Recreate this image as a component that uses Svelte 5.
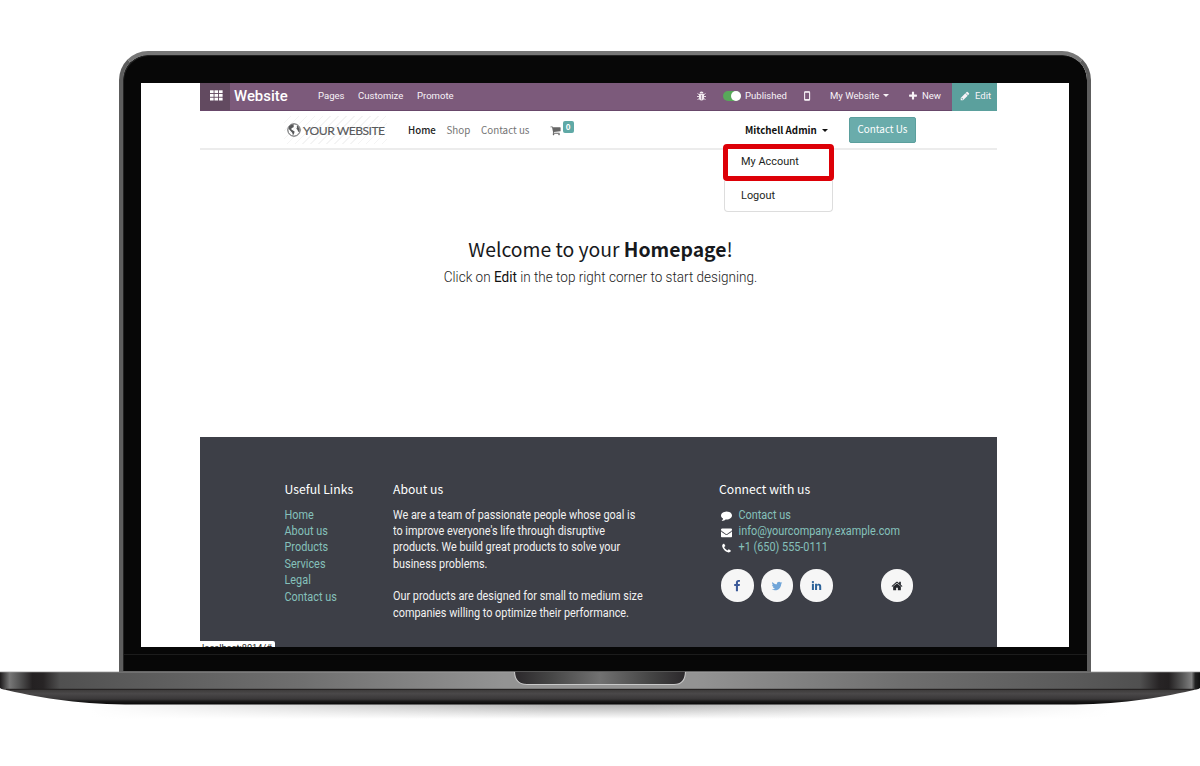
<script>
  const links = ['Home', 'About us', 'Products', 'Services', 'Legal', 'Contact us'];
  const icons = {
    cart: 'M704 1536q0 52-38 90t-90 38-90-38-38-90 38-90 90-38 90 38 38 90zm896 0q0 52-38 90t-90 38-90-38-38-90 38-90 90-38 90 38 38 90zm128-1088v512q0 24-16.5 42.5t-40.5 21.5l-1044 122q13 60 13 70 0 16-24 64h920q26 0 45 19t19 45-19 45-45 19h-1024q-26 0-45-19t-19-45q0-11 8-31.5t16-36 21.5-40 15.5-29.5l-177-823h-204q-26 0-45-19t-19-45 19-45 45-19h256q16 0 28.5 6.5t19.5 15.5 13 24.5 8 26 5.5 29.5 4.5 26h1201q26 0 45 19t19 45z',
    pencil: 'M491 1536l91-91-235-235-91 91v107h128v128h107zM960 416l416 416-832 832h-416v-416zm683 96q0 53-37 90l-166 166-416-416 166-165q36-38 90-38 53 0 91 38l235 234q37 39 37 91z',
    plus: 'M1600 736v192q0 40-28 68t-68 28h-416v416q0 40-28 68t-68 28h-192q-40 0-68-28t-28-68v-416h-416q-40 0-68-28t-28-68v-192q0-40 28-68t68-28h416v-416q0-40 28-68t68-28h192q40 0 68 28t28 68v416h416q40 0 68 28t28 68z',
    facebook: 'M1343 12v264h-157q-86 0-116 36t-30 108v189h293l-39 296h-254v759h-306v-759h-255v-296h255v-218q0-186 104-288.5t277-102.5q147 0 228 12z',
    twitter: 'M1684 408q-67 98-162 167 1 14 1 42 0 130-38 259.5t-115.5 248.5-184.5 210.5-258 146-323 54.5q-271 0-496-145 35 4 78 4 225 0 401-138-105-2-188-64.5t-114-159.5q33 5 61 5 43 0 85-11-112-23-185.5-111.5t-73.5-205.5v-4q68 38 146 41-66-44-105-115t-39-154q0-88 44-163 121 149 294.5 238.5t371.5 99.5q-8-38-8-74 0-134 94.5-228.5t228.5-94.5q140 0 236 102 109-21 205-78-37 115-142 178 93-10 186-50z',
    linkedin: 'M477 625v991h-330v-991h330zm21-306q1 73-50.5 122t-135.5 49h-2q-82 0-132-49t-50-122q0-74 51.5-122.5t134.5-48.5 133 48.5 51 122.5zm1166 729v568h-329v-530q0-105-40.5-164.5t-126.5-59.5q-63 0-105.5 34.5t-63.5 85.5q-11 30-11 81v553h-329q2-399 2-647t-1-296l-1-48h329v144h-2q20-32 41-56t56.5-52 87-43.5 114.5-15.5q171 0 275 113.5t104 332.5z',
    home: 'M1472 992v480q0 26-19 45t-45 19h-384v-384h-256v384h-384q-26 0-45-19t-19-45v-480q0-1 .5-3t.5-3l575-474 575 474q1 2 1 6zm223-69l-62 74q-8 9-21 11h-3q-13 0-21-7l-692-577-692 577q-12 8-24 7-13-2-21-11l-62-74q-8-10-7-23.5t11-21.5l719-599q32-26 76-26t76 26l244 204v-195q0-14 9-23t23-9h192q14 0 23 9t9 23v408l219 182q10 8 11 21.5t-7 23.5z',
    comment: 'M1792 896q0 174-120 321.5t-326 233-450 85.5q-70 0-145-8-198 175-460 242-49 14-114 22-17 2-30.5-9t-17.5-29v-1q-3-4-.5-12t2-10 4.5-9.5l6-9 7-8.5 8-9q7-8 31-34.5t34.5-38 31-39.5 32.5-51 27-59 26-76q-157-89-247.5-220t-90.5-281q0-130 71-248.5t191-204.5 286-136.5 348-50.5q244 0 450 85.5t326 233 120 321.5z',
    envelope: 'M1792 710v794q0 66-47 113t-113 47h-1472q-66 0-113-47t-47-113v-794q44 49 101 87 362 246 497 345 57 42 92.5 65.5t94.5 48 110 24.5h2q51 0 110-24.5t94.5-48 92.5-65.5q170-123 498-345 57-39 100-87zm0-294q0 79-49 151t-122 123q-376 261-468 325-10 7-42.5 31t-54 38.5-52 32.5-57.5 27-50 9h-2q-23 0-50-9t-57.5-27-52-32.5-54-38.5-42.5-31q-91-64-262-182.5t-205-142.5q-62-42-117-115.5t-55-136.5q0-78 41.5-130t118.5-52h1472q65 0 112.5 47t47.5 113z',
    phone: 'M1600 1240q0 27-10 70.5t-21 68.5q-21 50-122 106-94 51-186 51-27 0-53-3.5t-57.5-12.5-47-14.5-55.5-20.5-49-18q-98-35-175-83-127-79-264-216t-216-264q-48-77-83-175-3-9-18-49t-20.5-55.5-14.5-47-12.5-57.5-3.5-53q0-92 51-186 56-101 106-122 25-11 68.5-21t70.5-10q14 0 21 3 18 6 53 76 11 19 30 54t35 63.5 31 53.5q3 4 17.5 25t21.5 35.5 7 28.5q0 20-28.5 50t-62 55-62 53-28.5 46q0 9 5 22.5t8.5 20.5 14 24 11.5 19q76 137 174 235t235 174q2 1 19 11.5t24 14 20.5 8.5 22.5 5q18 0 46-28.5t53-62 55-62 50-28.5q14 0 28.5 7t35.5 21.5 25 17.5q25 15 53.5 31t63.5 35 54 30q70 35 76 53 3 7 3 21z',
  };
  const contacts = [
    ['comment', 'Contact us'],
    ['envelope', 'info@yourcompany.example.com'],
    ['phone', '+1 (650) 555-0111'],
  ];
</script>

{#snippet icon(name, size)}
  <svg width={size} height={size} viewBox="0 0 1792 1792" fill="currentColor"><path d={icons[name]} /></svg>
{/snippet}

<div class="stage">
  <div class="lid">
    <div class="display">
      <div class="page">
        <nav class="topbar">
          <span class="apps">
            <svg width="13" height="11" viewBox="0 0 13 11" fill="#fff">
              {#each [0.3, 4, 7.7] as y}
                {#each [0, 4.5, 9] as x}
                  <rect {x} {y} width="3.6" height="2.8" />
                {/each}
              {/each}
            </svg>
          </span>
          <span class="brand">Website</span>
          <span>Pages</span>
          <span>Customize</span>
          <span>Promote</span>
          <span>
            <svg width="9" height="10" viewBox="0 0 18 20">
              <path d="M5 5a4 4 0 0 1 8 0zM4 6h10v8a5 5 0 0 1-10 0z" fill="#f1e9ef" />
              <path d="M1 5l4 3M17 5l-4 3M0 11h5M18 11h-5M1 18l4-4M17 18l-4-4" stroke="#f1e9ef" stroke-width="1.8" fill="none" />
              <path d="M9 8v9" stroke="#7c5a7b" stroke-width="1.2" />
            </svg>
          </span>
          <span class="toggle"><i></i></span>
          <span class="published">Published</span>
          <span>
            <svg width="8" height="10" viewBox="0 0 8 10"><rect x="1.6" y=".7" width="5" height="8.6" rx=".8" fill="none" stroke="#f4eef4" stroke-width="1.1" /><path d="M1.6 1.2h5M1.6 8.6h5" stroke="#f4eef4" stroke-width="1.2" /></svg>
          </span>
          <span>My Website<b class="caret"></b></span>
          <span class="new">{@render icon('plus', 10)}New</span>
          <span class="edit">{@render icon('pencil', 10)}Edit</span>
        </nav>

        <header class="sitebar">
          <div class="logo">
            <svg width="14" height="14" viewBox="0 0 14 14">
              <circle cx="7" cy="7" r="6.2" fill="none" stroke="#58595b" stroke-width="1" />
              <path d="M2 3.3L4.6 1.4 7.2 1.6 6.4 2.9 7 4 5.4 4.8 4 6 5.2 7 7.6 8.4 7.2 10.2 6 12.4 5.2 9.8 3.8 8.2 1.8 6zM9.8 2.4l1.6 1.2 1.2 2.8-.4 2.6-1.2-.4-.4-1.6-1.2-1.2.6-1.6z" fill="#58595b" />
            </svg>
            <span>YOUR WEBSITE</span>
          </div>
          <span class="current">Home</span>
          <span>Shop</span>
          <span>Contact us</span>
          <span class="cart">{@render icon('cart', 11)}<b>0</b></span>
          <div class="user">
            Mitchell Admin<b class="caret"></b>
            <div class="menu">
              <div class="account">My Account</div>
              <div class="logout">Logout</div>
            </div>
          </div>
          <button>Contact Us</button>
        </header>

        <main>
          <h1>Welcome to your <b>Homepage</b>!</h1>
          <p>Click on <b>Edit</b> in the top right corner to start designing.</p>
        </main>

        <footer>
          <section>
            <h2>Useful Links</h2>
            {#each links as l}<div class="row link tall">{l}</div>{/each}
          </section>
          <section class="about">
            <h2>About us</h2>
            <div class="row tall">We are a team of passionate people whose goal is</div>
            <div class="row tall">to improve everyone's life through disruptive</div>
            <div class="row tall">products. We build great products to solve your</div>
            <div class="row tall">business problems.</div>
            <div class="row tall second">Our products are designed for small to medium size</div>
            <div class="row tall">companies willing to optimize their performance.</div>
          </section>
          <section>
            <h2>Connect with us</h2>
            {#each contacts as [name, text]}
              <div class="row contact">{@render icon(name, 11)}<span class="link tall">{text}</span></div>
            {/each}
            <div class="social">
              <span class="fb">{@render icon('facebook', 12)}</span>
              <span class="tw">{@render icon('twitter', 12)}</span>
              <span class="li">{@render icon('linkedin', 11)}</span>
              <span class="hm">{@render icon('home', 12)}</span>
            </div>
          </section>
        </footer>
        <div class="status">localhost:8014/#</div>
      </div>
    </div>
  </div>

  <svg class="base" width="1200" height="60" viewBox="0 0 1200 60">
    <defs>
      <linearGradient id="deck">
        <stop offset="0" stop-color="#1c1a1b" /><stop offset=".008" stop-color="#777" />
        <stop offset=".016" stop-color="#555" /><stop offset=".027" stop-color="#242122" />
        <stop offset=".036" stop-color="#272425" /><stop offset=".05" stop-color="#505050" />
        <stop offset=".1" stop-color="#595959" /><stop offset=".25" stop-color="#6f6f6f" />
        <stop offset=".42" stop-color="#939393" /><stop offset=".58" stop-color="#939393" />
        <stop offset=".75" stop-color="#6f6f6f" /><stop offset=".9" stop-color="#595959" />
        <stop offset=".95" stop-color="#505050" /><stop offset=".966" stop-color="#272425" />
        <stop offset=".974" stop-color="#242122" /><stop offset=".985" stop-color="#555" />
        <stop offset=".993" stop-color="#808080" /><stop offset=".996" stop-color="#222" /><stop offset="1" stop-color="#111" />
      </linearGradient>
      <linearGradient id="belly" x2="0" y2="1">
        <stop offset="0" stop-color="#3a3838" /><stop offset=".3" stop-color="#4a4849" />
        <stop offset=".65" stop-color="#393738" /><stop offset=".8" stop-color="#1b1a1a" /><stop offset="1" stop-color="#080808" />
      </linearGradient>
      <linearGradient id="notch">
        <stop offset="0" stop-color="#2b282b" /><stop offset=".2" stop-color="#444" /><stop offset=".5" stop-color="#717171" />
        <stop offset=".8" stop-color="#444" /><stop offset="1" stop-color="#2b282b" />
      </linearGradient>
      <linearGradient id="shade" x2="0" y2="1">
        <stop offset="0" stop-color="#aaa" /><stop offset="1" stop-color="#fff" />
      </linearGradient>
      <linearGradient id="fade"><stop offset="0" stop-color="#fff" /><stop offset=".45" stop-color="#fff" stop-opacity="0" /><stop offset=".55" stop-color="#fff" stop-opacity="0" /><stop offset="1" stop-color="#fff" /></linearGradient>
    </defs>
    <rect x="90" y="32" width="1020" height="16" fill="url(#shade)" />
    <rect x="90" y="32" width="1020" height="17" fill="url(#fade)" />
    <path d="M2 18C35 26 75 33 125 33.4H1075C1125 33 1165 26 1198 18z" fill="url(#belly)" />
    <path d="M0 1H1200V17Q1198 19 1194 18H6Q2 19 0 17z" fill="url(#deck)" />
    <path d="M0 .9H1200" stroke="#aaa" stroke-opacity=".75" />
    <path d="M6 18.3H1194" stroke="#211e1e" />
    <path d="M514.5 0C514.5 8 518 13.5 527 13.5H674C682 13.5 685.500 8 685.500 0z" fill="url(#notch)" stroke="#c8c8c8" stroke-width="1.1" />
    <path d="M119 .3H1091" stroke="#4b4b4b" />
  </svg>
</div>

<style>
  :global(body) { margin: 0; background: #fff; }
  .stage { width: 1200px; height: 766px; padding-top: 51px; box-sizing: border-box; overflow: hidden; font-family: Roboto, sans-serif; }
  .lid {
    width: 972px; height: 620px; margin-left: 119px; box-sizing: border-box; padding: 28px 18px 0;
    border: 4px solid #5d5d5d; border-top-color: #777; border-bottom: 0; border-radius: 29px 29px 0 0;
    background: linear-gradient(#070707 0 599px, #1c1c1c 599px 600px, #070707 600px);
    background-clip: padding-box; box-shadow: inset 1px 1px 0 #222;
  }
  .display { width: 928px; height: 564px; background: #fff; overflow: hidden; padding-left: 59px; box-sizing: border-box; }
  .page { width: 797px; height: 564px; position: relative; }
  svg { display: block; flex: none; }

  .topbar {
    display: grid; grid-template-columns: 30px 88px 40px 59px 280px 26px 22px 58px 27px 78px 44px 45px;
    height: 28px; box-sizing: border-box; background: #7c5a7b; border-bottom: 1px solid #68476a; color: #f8f3f8; font-size: 9.55px; line-height: 25px;
  }
  .topbar > span { display: flex; align-items: center; white-space: nowrap; height: 25px; }
  .topbar .apps { background: #624a60; height: 27px; padding-left: 10px; padding-bottom: 3px; box-sizing: border-box; }
  .topbar .brand { font-size: 14.9px; font-weight: 500; padding-left: 4px; color: #fff; height: 26px; }
  .toggle i { width: 18px; height: 10px; border-radius: 5px; background: #58a85a; display: flex; justify-content: flex-end; }
  .toggle i::after { content: ''; width: 10px; height: 10px; border-radius: 50%; background: #fff; }
  .caret { border: 3px solid transparent; border-top-color: currentColor; border-bottom: 0; display: inline-block; margin-left: 4px; vertical-align: 2px; }
  .topbar .new { gap: 4px; }
  .topbar .edit { gap: 5px; background: #5ba09d; padding-left: 8px; height: 28px; box-sizing: border-box; padding-bottom: 3px; }

  .sitebar {
    display: grid; grid-template-columns: 121px 38.5px 34.5px 69px 195px 104px 67px; padding-left: 87px; height: 39px; box-sizing: border-box;
    align-items: center; border-bottom: 2px solid #ececec; font: 400 9.8px 'Noto Sans CJK SC', sans-serif; color: #747474; white-space: nowrap;
  }
  .sitebar > span { line-height: 38px; }
  .logo { display: flex; align-items: center; gap: 2px; height: 28px; margin-left: -3px; padding-left: 3px; width: 103px; box-sizing: border-box; color: #58595b; font: 400 12.1px/28px Lato, sans-serif; letter-spacing: -.5px; -webkit-text-stroke: .15px #58595b; background: repeating-linear-gradient(135deg, #fff 0 4.5px, #f4f4f4 4.5px 5.6px); }
  .logo span { transform: translateY(.5px); }
  .sitebar .current { color: #222; font-weight: 500; font-size: 9.7px; }
  .cart { display: flex; align-items: center; gap: 1.5px; color: #666; }
  .cart b { background: #5fa9a6; color: #fff; width: 11px; height: 12px; border-radius: 2px; font-size: 8px; line-height: 12px; text-align: center; margin-bottom: 6px; }
  .user { position: relative; color: #111; font-size: 9.75px; font-weight: 700; line-height: 38px; }
  .user > .caret { margin-left: 5px; }
  .menu { position: absolute; left: -22px; top: 33px; width: 111px; font: 10.9px Roboto, sans-serif; color: #1d1f22; }
  .account { height: 36.5px; box-sizing: border-box; border: 5px solid #dd0007; border-radius: 4px; background: #fff; padding-left: 13px; line-height: 25px; }
  .logout { height: 31.5px; margin: 0 1px; box-sizing: border-box; border: 1px solid #ddd; border-top: 0; border-radius: 0 0 4px 4px; background: #fff; padding-left: 16px; line-height: 29px; }
  .account, .logout { letter-spacing: .02px; }
  button { height: 26px; border: 1px solid #5b9f9d; border-radius: 2px; background: #6aacab; color: #fff; padding: 0 0 2px; font: 400 9.9px 'Noto Sans CJK SC', sans-serif; }

  main { height: 287px; box-sizing: border-box; padding-top: 83px; text-align: center; color: #17191c; padding-left: 4px; }
  h1 { margin: 0; font: 400 19.35px/32px 'Noto Sans CJK SC', sans-serif; }
  p { margin: 0; font-size: 13.55px; font-weight: 300; line-height: 25px; color: #222; transform: scaleY(1.05); }
  p b { font-weight: 400; color: #111; }

  footer { height: 210px; box-sizing: border-box; padding: 42px 0 0 84.5px; background: #3d3f47; color: #f2f2f2; display: grid; grid-template-columns: 108.5px 326px 220px; font-size: 10.88px; }
  h2 { margin: -.5px 0 9.3px; font: 400 12.2px/20px 'Noto Sans CJK SC', sans-serif; color: #fff; white-space: nowrap; }
  .row { height: 16.35px; line-height: 16.35px; white-space: nowrap; }
  .tall { transform: scaleY(1.12); }
  .link { color: #85c1bb; }
  .second { margin-top: 16.3px; }
  .contact { display: flex; align-items: center; gap: 7px; color: #fff; padding-left: 1.5px; }
  .social { display: grid; grid-template-columns: 39.7px 39.7px 80.6px 33px; margin: 12.6px 0 0 2px; }
  .social span { width: 32.5px; height: 32.5px; border-radius: 50%; background: #f6f6f6; display: flex; align-items: center; justify-content: center; }
  .fb { color: #3b5998; }
  .tw { color: #70a5d8; }
  .li { color: #2c6299; }
  .hm { color: #24262b; }
  .status { position: absolute; left: 0; bottom: 0; width: 75px; height: 6px; overflow: hidden; background: #fff; border-radius: 0 2px 0 0; font-size: 9.2px; line-height: 13px; color: #222; padding-left: 2px; box-sizing: border-box; white-space: nowrap; }
</style>
